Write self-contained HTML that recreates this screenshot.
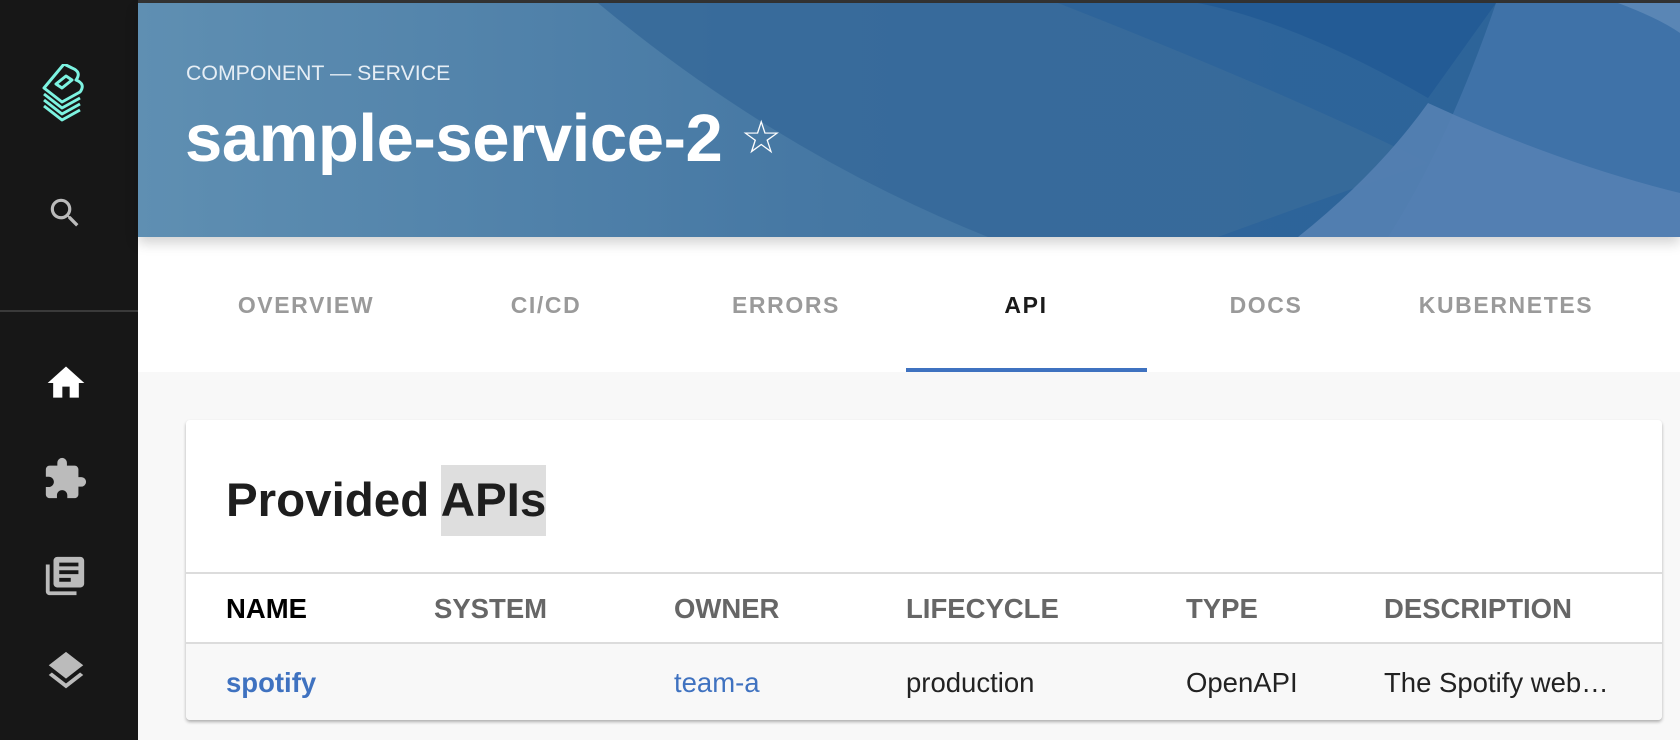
<!DOCTYPE html>
<html><head><meta charset="utf-8"><style>
*{margin:0;padding:0;box-sizing:border-box}
body{width:1680px;height:740px;overflow:hidden;background:#f8f8f8;font-family:"Liberation Sans",Arial,sans-serif;position:relative}
#top{position:absolute;left:0;top:0;width:1680px;height:3px;background:#333}
#side{position:absolute;left:0;top:0;width:138px;height:740px;background:#171717}
#side .div{position:absolute;left:0;top:310px;width:138px;height:2px;background:#3a3a3a}
#hdr{position:absolute;left:138px;top:3px;width:1542px;height:234px;overflow:hidden;background:#3f74a1;box-shadow:0 6px 12px rgba(0,0,0,.18);z-index:2}
#hdr .t1{position:absolute;left:48px;top:58px;color:#e6eef5;font-size:21.3px}
#hdr .t2{position:absolute;left:47px;top:97px;color:#fff;font-size:67px;font-weight:bold;letter-spacing:-0.4px;white-space:nowrap}
#tabs{position:absolute;left:138px;top:237px;width:1542px;height:135px;background:#fff}
.tab{position:absolute;top:55px;width:240px;text-align:center;font-size:23px;font-weight:bold;letter-spacing:1.6px;color:#9a9a9a}
#ul{position:absolute;left:906px;top:368px;width:241px;height:4px;background:#3f72c0}
#card{position:absolute;left:186px;top:420px;width:1476px;height:300px;background:#fff;border-radius:4px;box-shadow:0 2px 3px rgba(0,0,0,.3)}
#card h2{position:absolute;left:40px;top:53px;font-size:47.5px;font-weight:bold;color:#1e1e1e;white-space:nowrap}
#card h2 span{background:#dedede;padding:9px 0}
.line{position:absolute;left:0;width:1476px;height:2px;background:#dcdcdc}
.c{position:absolute;font-size:27.5px;white-space:nowrap}
.h{top:173px;font-weight:bold;color:#666}
.r{top:247px;color:#222}
.row{position:absolute;left:0;top:224px;width:1476px;height:76px;background:#f8f8f8;border-radius:0 0 4px 4px}
.ico{position:absolute}
</style></head><body>
<div id="top"></div>
<div id="side">
<svg class="ico" style="left:40px;top:64px" width="48" height="60" viewBox="0 0 48 60">
<g fill="none" stroke="#7df3e1" stroke-width="3" stroke-linejoin="round">
<path d="M4 30 L22 44 L40 34"/><path d="M4 36 L22 50 L40 40"/><path d="M4 42 L22 56 L40 46"/>
<path d="M4 24 L22 38 L40 28 Q46 20 36 16 Q42 8 32 4 L24 0 Z"/><path d="M16 20 L26 12 L32 16 L22 24 Z"/>
</g></svg>
<svg class="ico" style="left:46px;top:194px" width="38" height="38" viewBox="0 0 24 24"><path fill="#bbb" d="M15.5 14h-.79l-.28-.27A6.470 6.47 0 0 0 16 9.5 6.5 6.5 0 1 0 9.5 16c1.610 0 3.09-.59 4.23-1.57l.27.28v.79l5 4.99L20.49 19l-4.99-5zm-6 0C7.01 14 5 11.99 5 9.5S7.01 5 9.5 5 14 7.01 14 9.5 11.99 14 9.5 14z"/></svg>
<div class="div"></div>
<svg class="ico" style="left:44px;top:361px" width="44" height="44" viewBox="0 0 24 24"><path fill="#fff" d="M10 20v-6h4v6h5v-8h3L12 3 2 12h3v8z"/></svg>
<svg class="ico" style="left:42px;top:456px" width="46" height="46" viewBox="0 0 24 24"><path fill="#bbb" d="M20.5 11H19V7c0-1.1-.9-2-2-2h-4V3.5a2.5 2.5 0 0 0-5 0V5H4c-1.1 0-1.99.9-1.990 2v3.8H3.5c1.49 0 2.7 1.21 2.7 2.7s-1.21 2.7-2.7 2.7H2V20c0 1.1.9 2 2 2h3.8v-1.5c0-1.49 1.21-2.7 2.7-2.7 1.49 0 2.7 1.21 2.7 2.7V22H17c1.1 0 2-.9 2-2v-4h1.5a2.5 2.5 0 0 0 0-5z"/></svg>
<svg class="ico" style="left:42px;top:553px" width="46" height="46" viewBox="0 0 24 24"><path fill="#bbb" d="M4 6H2v14c0 1.1.9 2 2 2h14v-2H4V6zm16-4H8c-1.1 0-2 .9-2 2v12c0 1.1.9 2 2 2h12c1.1 0 2-.9 2-2V4c0-1.1-.9-2-2-2zm-1 9H9V9h10v2zm-4 4H9v-2h6v2zm4-8H9V5h10v2z"/></svg>
<svg class="ico" style="left:43px;top:648px" width="46" height="46" viewBox="0 0 24 24"><path fill="#bbb" d="M11.990 18.54l-7.37-5.730L3 14.07l9 7 9-7-1.63-1.27-7.38 5.74zM12 16l7.36-5.73L21 9l-9-7-9 7 1.63 1.27L12 16z"/></svg>
</div>
<div id="hdr">
<svg style="position:absolute;left:0;top:0" width="1542" height="234" viewBox="0 0 1542 234" preserveAspectRatio="none">
<defs><linearGradient id="g1" x1="0" y1="0" x2="1" y2="0"><stop offset="0" stop-color="#5f8fb2"/><stop offset=".45" stop-color="#4577a3"/><stop offset="1" stop-color="#3a6fa2"/></linearGradient></defs>
<rect width="1542" height="234" fill="url(#g1)"/>
<path d="M460 0 Q640 150 850 234 L1542 234 L1542 0 Z" fill="#356899" opacity=".8"/>
<path d="M920 0 Q1150 90 1290 160 Q1200 190 1080 234 L1542 234 L1542 0 Z" fill="#28609a" opacity=".6"/>
<path d="M1060 0 Q1160 20 1290 95 L1358 0 Z" fill="#235b95"/>
<path d="M1358 0 Q1310 140 1250 234 L1542 234 L1542 0 Z" fill="#3f72a8"/>
<path d="M1290 100 Q1420 160 1542 190 L1542 234 L1160 234 Q1240 170 1290 100 Z" fill="#5581b2" opacity=".9"/>
<path d="M1480 0 Q1520 15 1542 30 L1542 0 Z" fill="#5a86b5"/>
</svg>
<div class="t1">COMPONENT — SERVICE</div>
<div class="t2">sample-service-2 <span style="font-size:46px;font-weight:normal;position:relative;top:-8px">☆</span></div>
</div>
<div id="tabs">
<div class="tab" style="left:48px">OVERVIEW</div>
<div class="tab" style="left:288px">CI/CD</div>
<div class="tab" style="left:528px">ERRORS</div>
<div class="tab" style="left:768px;color:#1a1a1a">API</div>
<div class="tab" style="left:1008px">DOCS</div>
<div class="tab" style="left:1248px">KUBERNETES</div>
</div>
<div id="ul"></div>
<div id="card">
<h2>Provided <span>APIs</span></h2>
<div class="line" style="top:152px"></div>
<div class="row"></div>
<div class="line" style="top:222px"></div>
<div class="c h" style="left:40px;color:#000">NAME</div>
<div class="c h" style="left:248px">SYSTEM</div>
<div class="c h" style="left:488px">OWNER</div>
<div class="c h" style="left:720px">LIFECYCLE</div>
<div class="c h" style="left:1000px">TYPE</div>
<div class="c h" style="left:1198px">DESCRIPTION</div>
<div class="c r" style="left:40px;color:#3f72c0;font-weight:bold">spotify</div>
<div class="c r" style="left:488px;color:#3f72c0">team-a</div>
<div class="c r" style="left:720px">production</div>
<div class="c r" style="left:1000px">OpenAPI</div>
<div class="c r" style="left:1198px">The Spotify web…</div>
</div>
</body></html>
